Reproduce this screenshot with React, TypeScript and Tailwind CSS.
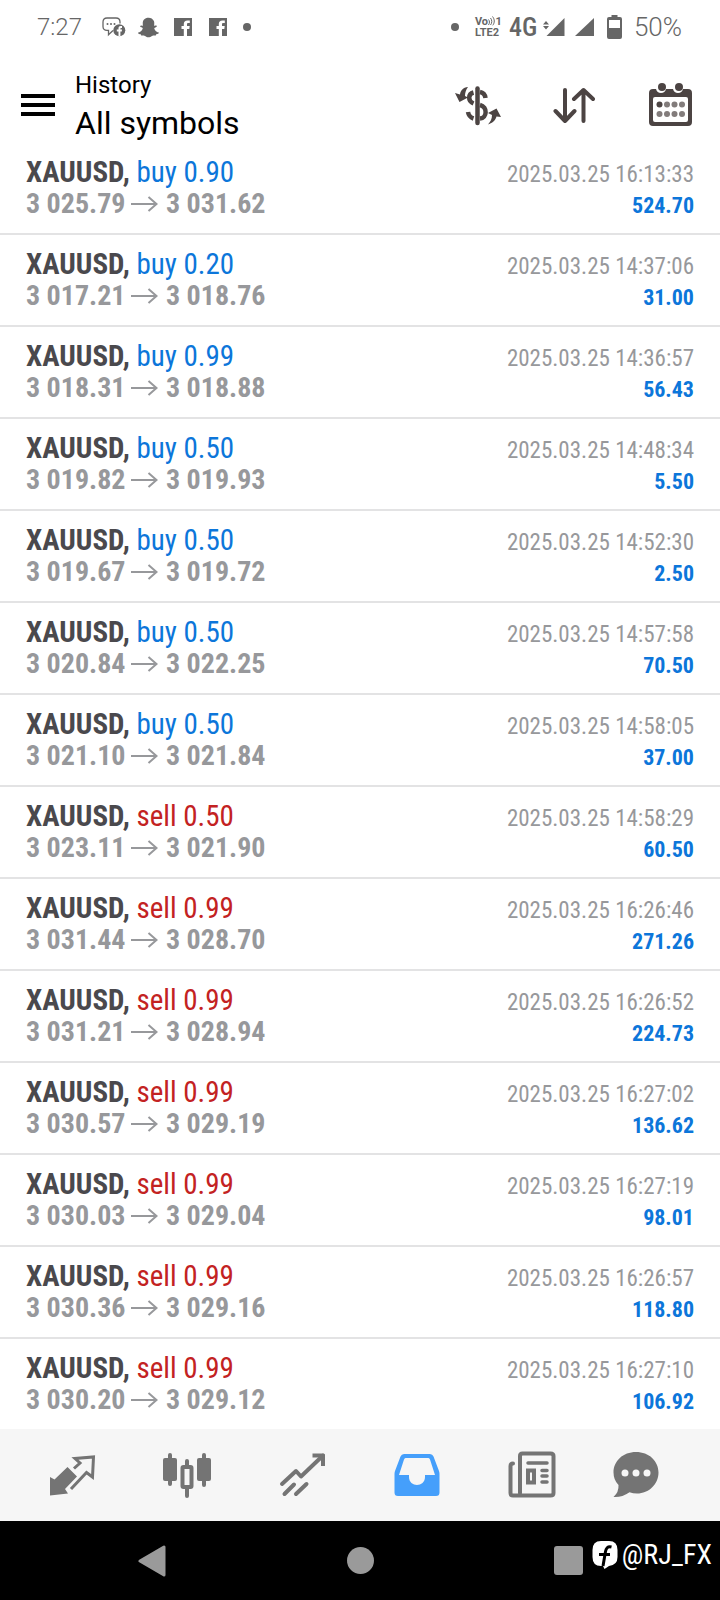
import { FaSnapchatGhost } from "react-icons/fa";

type Deal = {
  side: "buy" | "sell";
  volume: string;
  open: string;
  close: string;
  time: string;
  profit: string;
};

const deals: Deal[] = [
  { side: "buy", volume: "0.90", open: "3 025.79", close: "3 031.62", time: "2025.03.25 16:13:33", profit: "524.70" },
  { side: "buy", volume: "0.20", open: "3 017.21", close: "3 018.76", time: "2025.03.25 14:37:06", profit: "31.00" },
  { side: "buy", volume: "0.99", open: "3 018.31", close: "3 018.88", time: "2025.03.25 14:36:57", profit: "56.43" },
  { side: "buy", volume: "0.50", open: "3 019.82", close: "3 019.93", time: "2025.03.25 14:48:34", profit: "5.50" },
  { side: "buy", volume: "0.50", open: "3 019.67", close: "3 019.72", time: "2025.03.25 14:52:30", profit: "2.50" },
  { side: "buy", volume: "0.50", open: "3 020.84", close: "3 022.25", time: "2025.03.25 14:57:58", profit: "70.50" },
  { side: "buy", volume: "0.50", open: "3 021.10", close: "3 021.84", time: "2025.03.25 14:58:05", profit: "37.00" },
  { side: "sell", volume: "0.50", open: "3 023.11", close: "3 021.90", time: "2025.03.25 14:58:29", profit: "60.50" },
  { side: "sell", volume: "0.99", open: "3 031.44", close: "3 028.70", time: "2025.03.25 16:26:46", profit: "271.26" },
  { side: "sell", volume: "0.99", open: "3 031.21", close: "3 028.94", time: "2025.03.25 16:26:52", profit: "224.73" },
  { side: "sell", volume: "0.99", open: "3 030.57", close: "3 029.19", time: "2025.03.25 16:27:02", profit: "136.62" },
  { side: "sell", volume: "0.99", open: "3 030.03", close: "3 029.04", time: "2025.03.25 16:27:19", profit: "98.01" },
  { side: "sell", volume: "0.99", open: "3 030.36", close: "3 029.16", time: "2025.03.25 16:26:57", profit: "118.80" },
  { side: "sell", volume: "0.99", open: "3 030.20", close: "3 029.12", time: "2025.03.25 16:27:10", profit: "106.92" },
];

function FacebookSquare() {
  return (
    <svg width="18" height="18" viewBox="0 0 18 18" fill="currentColor" aria-hidden="true">
      <path d="M0 0H18V18H13V11H15.3L15.7 8H13V6.4C13 5.5 13.4 5 14.4 5H15.8V2.4H13.5C11 2.4 9.8 3.8 9.8 6V8H7.5V11H9.8V18H0Z" />
    </svg>
  );
}

function StatusBar() {
  return (
    <div className="flex h-[54px] items-center justify-between pl-[37px] pr-[38px] text-[#666]">
      <div className="flex items-center">
        <span className="w-[65px] text-2xl font-light">7:27</span>
        <svg width="24" height="20" viewBox="0 0 24 20" fill="none" aria-hidden="true">
          <path d="M11 13.5 6.5 17.8V13.4H5C2.4 13.4 1 12 1 9.5V5C1 2.4 2.4 1 5 1H14C16.6 1 18 2.4 18 5V6.5" stroke="currentColor" strokeWidth="1.3" />
          <g fill="currentColor">
            <circle cx="5.5" cy="7" r="1" />
            <circle cx="9" cy="7" r="1" />
            <circle cx="12.5" cy="7" r="1" />
            <circle cx="17.3" cy="13.2" r="6" />
          </g>
          <path d="M16.5 19.2V14.4H14.8V12.6H16.5V11.3C16.5 9.9 17.3 9.1 18.7 9.1H20V10.9H19C18.6 10.9 18.4 11.1 18.4 11.5V12.6H20L19.8 14.4H18.4V19.2Z" fill="#fff" />
        </svg>
        <FaSnapchatGhost className="ml-3 h-[21px] w-[21px]" aria-hidden="true" />
        <span className="ml-[15px] flex gap-[17px]">
          <FacebookSquare />
          <FacebookSquare />
        </span>
        <span className="ml-4 size-2 rounded-full bg-[#666]" />
      </div>
      <div className="flex items-center">
        <span className="size-2 rounded-full bg-[#666]" />
        <span className="ml-4 flex w-[27px] flex-col text-[11px] font-bold leading-[11px]">
          <span className="flex justify-between">
            <span>Vo</span>
            <svg width="7" height="10" viewBox="0 0 7 10" fill="none" stroke="currentColor" aria-hidden="true">
              <path d="M.5 3.5C1.8 5 1.8 7 .5 9M2.5 2C4.2 4 4.2 7 2.5 9M4.5 .5C6.8 3.3 6.8 6.7 4.8 9.3" />
            </svg>
            <span>1</span>
          </span>
          <span>LTE2</span>
        </span>
        <span className="ml-[7px] w-8 font-['Roboto_Condensed',Roboto,sans-serif] text-[26px] font-medium">4G</span>
        <svg className="ml-0.5" width="22" height="18" viewBox="0 0 22 18" fill="currentColor" aria-hidden="true">
          <path d="M21.5 0V18H3.5ZM3 3 6 6.5H0ZM0 8H6L3 11.5Z" />
        </svg>
        <svg className="ml-[10px]" width="19" height="18" viewBox="0 0 19 18" fill="currentColor" aria-hidden="true">
          <path d="M19 0V18H0Z" />
        </svg>
        <svg className="ml-[13px]" width="15" height="24" viewBox="0 0 15 24" fill="currentColor" aria-hidden="true">
          <path fillRule="evenodd" d="M4.5 0H10.5V2H13Q15 2 15 4V22Q15 24 13 24H2Q0 24 0 22V4Q0 2 2 2H4.5ZM2 5V13H13V5Z" />
        </svg>
        <span className="ml-3 text-[26px] font-light">50%</span>
      </div>
    </div>
  );
}

function AppHeader() {
  return (
    <header className="flex h-[89px] items-start justify-between pl-[21px] pr-[27px]">
      <div className="flex items-start">
        <button type="button" aria-label="Open menu" className="mt-10 flex w-[34px] flex-col gap-[5px]">
          <span className="h-1 w-full bg-black" />
          <span className="h-1 w-full bg-black" />
          <span className="h-1 w-full bg-black" />
        </button>
        <div className="ml-5 pt-[13px] text-black">
          <p className="text-2xl leading-9">History</p>
          <h1 className="text-[32px] leading-10">All symbols</h1>
        </div>
      </div>
      <div className="mt-7 flex items-center text-[#4c4443]">
        <button type="button" aria-label="Currency">
          <svg width="46" height="46" viewBox="0 0 46 46" fill="none" aria-hidden="true">
            <g stroke="currentColor" strokeWidth="4.5">
              <path d="M22.5 6.5V41" strokeLinecap="round" />
              <path d="M18.5 10.5C13 12 12.5 19 18.5 21.5M25 10C28 10.5 30 12.5 30.5 16M25 23C33 25 32 36 25 36.5M18.5 36.5C15.5 35.5 13.5 33 13 30" />
            </g>
            <g fill="currentColor">
              <path d="M13 5C8 5.5 5.5 8.5 5 12.5L0 11 4.5 20 13 15.5 10 14C10 10.5 11 7.5 13 5Z" />
              <path d="M33 42.5C38 41 40.5 38 41.5 34.5L46 35 41.5 26.5 33 31 37 33C37 37 35.5 39.5 33 42.5Z" />
            </g>
          </svg>
        </button>
        <button type="button" aria-label="Sort" className="ml-[52px]">
          <svg width="42" height="46" viewBox="0 0 42 46" fill="none" stroke="currentColor" strokeWidth="4" strokeLinecap="round" strokeLinejoin="round" aria-hidden="true">
            <path d="M12 8V39M2.5 29 12 39 21.5 29M30.5 39V8M21 17 30.5 8 40 17" />
          </svg>
        </button>
        <button type="button" aria-label="Select period" className="ml-[52px]">
          <svg width="46" height="46" viewBox="0 0 46 46" fill="none" aria-hidden="true">
            <path fillRule="evenodd" fill="currentColor" d="M4 7H9Q10 11 14 11Q18 11 19 7H26Q27 11 31 11Q35 11 36 7H41Q45 7 45 11V40Q45 44 41 44H6Q2 44 2 40V11Q2 7 6 7ZM8 15Q6 15 6 17V38Q6 40 8 40H39Q41 40 41 38V17Q41 15 39 15Z" />
            <g fill="currentColor">
              <circle cx="15" cy="5" r="4" />
              <circle cx="32" cy="5" r="4" />
              <circle cx="12.5" cy="22.5" r="3" />
            </g>
            <g fill="#827c7b">
              <circle cx="20" cy="22.5" r="3" />
              <circle cx="27.5" cy="22.5" r="3" />
              <circle cx="35" cy="22.5" r="3" />
              <circle cx="12.5" cy="32" r="3" />
              <circle cx="20" cy="32" r="3" />
              <circle cx="27.5" cy="32" r="3" />
              <circle cx="35" cy="32" r="3" />
            </g>
          </svg>
        </button>
      </div>
    </header>
  );
}

function DealRow({ deal }: { deal: Deal }) {
  return (
    <li className="border-b-2 border-[#e3e3e4] px-[26px] py-[13px] last:border-b-0">
      <div className="flex h-8 items-baseline justify-between whitespace-nowrap">
        <p className="text-[29px] leading-8">
          <span className="font-bold text-[#4a494d]">XAUUSD,</span>{" "}
          <span className={deal.side === "buy" ? "text-[#0c76da]" : "text-[#c32222]"}>
            {deal.side} {deal.volume}
          </span>
        </p>
        <time className="text-[23px] leading-8 text-[#97989b]">{deal.time}</time>
      </div>
      <div className="flex h-8 items-end justify-between whitespace-nowrap">
        <p className="flex text-[28px] font-bold leading-8 text-[#97989b]">
          <span className="w-[105px]">{deal.open}</span>
          <svg className="mr-2 mt-0.5" width="27" height="28" viewBox="0 0 27 28" fill="none" stroke="currentColor" strokeWidth="2" aria-label="to">
            <path d="M0 14H25.5M17.5 7 25.5 14 17.5 21" />
          </svg>
          <span>{deal.close}</span>
        </p>
        <span className="text-[22px] font-bold leading-7 text-[#0c76da]">{deal.profit}</span>
      </div>
    </li>
  );
}

function BottomNav() {
  const item = "flex items-center justify-center";
  return (
    <nav className="grid h-[92px] grid-cols-[5fr_5fr_5fr_5fr_5fr_4fr] bg-[#f6f6f6] pl-3.5 pr-[38px] text-[#747474]">
      <button type="button" aria-label="Quotes" className={item}>
        <svg width="48" height="48" viewBox="0 0 48 48" fill="none" aria-hidden="true">
          <path fill="currentColor" d="M2 44.500V26L6.500 28.500 19.500 16 29 25.500 17 38 20 42.500Z" />
          <path stroke="currentColor" strokeWidth="3" d="M26 17.500 32 12 27 7.500 45.500 6 44.500 26 38.500 21.500 23 38" />
        </svg>
      </button>
      <button type="button" aria-label="Charts" className={item}>
        <svg width="48" height="48" viewBox="0 0 48 48" fill="none" aria-hidden="true">
          <g fill="currentColor">
            <rect x="0" y="7" width="14" height="23" rx="2" />
            <rect x="34" y="7" width="14" height="23" rx="2" />
          </g>
          <g stroke="currentColor" strokeWidth="4">
            <path strokeLinecap="round" d="M7 4V33M41 4V34M24 10V15M24 38V45" />
            <rect x="19.5" y="16" width="9" height="20" rx="1" />
          </g>
        </svg>
      </button>
      <button type="button" aria-label="Trade" className={item}>
        <svg width="48" height="48" viewBox="0 0 48 48" fill="none" stroke="currentColor" strokeWidth="4" aria-hidden="true">
          <path strokeLinecap="round" strokeLinejoin="round" d="M4 33 18 20 23 25.5 45 4.5M6.5 43 16 33.5M18 43 28.5 33" />
          <path strokeLinejoin="round" d="M34.5 4.5H45V15" />
        </svg>
      </button>
      <button type="button" aria-label="History" aria-current="page" className="flex items-center justify-center text-[#459ffb]">
        <svg width="48" height="48" viewBox="0 0 48 48" fill="currentColor" aria-hidden="true">
          <path fillRule="evenodd" d="M11 3H37Q39.5 3 40.5 5.5L46 20Q46.500 21.500 46.500 23V41.500Q46.500 45 43 45H5Q1.500 45 1.500 41.500V23Q1.500 21.500 2 20L7.500 5.500Q8.500 3 11 3ZM12.500 7Q11.500 7 11 8.500L6 24H16V26C16 36.500 32 36.500 32 26V24H42L37 8.500Q36.500 7 35.500 7Z" />
        </svg>
      </button>
      <button type="button" aria-label="News" className={item}>
        <svg width="48" height="48" viewBox="0 0 48 48" fill="none" stroke="currentColor" strokeWidth="4" strokeLinecap="round" aria-hidden="true">
          <path d="M12 42V5Q12 2.5 14.5 2.5H42.5Q45.5 2.5 45.5 5V42Q45.5 44.5 42.5 44.5H5Q2.5 44.5 2.5 42V15Q2.5 12.5 5 12.5" />
          <path strokeWidth="3.5" d="M20 12H39M34 19.5H39M34 25H39M34 31H39" />
          <rect x="20" y="19.5" width="6" height="12" />
        </svg>
      </button>
      <button type="button" aria-label="Messages" className={item}>
        <svg width="48" height="48" viewBox="0 0 48 48" aria-hidden="true">
          <path fill="currentColor" d="M24 1C37 1 46.5 10 46.5 21.5S37 42.5 25 42.5Q21 42.5 17.5 41.2Q10 46.5 1.5 46Q7 41 6.500 34Q1.500 29 1.500 21.500C1.500 10 11 1 24 1Z" />
          <g fill="#f6f6f6">
            <circle cx="13" cy="22" r="3.5" />
            <circle cx="24" cy="22" r="3.5" />
            <circle cx="35" cy="22" r="3.5" />
          </g>
        </svg>
      </button>
    </nav>
  );
}

function SystemBar() {
  return (
    <div className="relative grid h-[79px] grid-cols-3 bg-black px-12 text-[#9a9a9a]">
      <button type="button" aria-label="Back" className="flex items-center justify-center">
        <svg width="28" height="32" viewBox="0 0 28 32" fill="currentColor" stroke="currentColor" strokeWidth="3" strokeLinejoin="round" aria-hidden="true">
          <path d="M2 16 26 2V30Z" />
        </svg>
      </button>
      <button type="button" aria-label="Home" className="flex items-center justify-center">
        <span className="size-[27px] rounded-full bg-[#9a9a9a]" />
      </button>
      <button type="button" aria-label="Recent apps" className="flex items-center justify-center">
        <span className="size-[29px] rounded-[3px] bg-[#9a9a9a]" />
      </button>
      <div className="absolute right-2 top-[18px] flex items-center gap-1 text-white">
        <svg width="26" height="28" viewBox="0 0 26 28" aria-hidden="true">
          <path fill="#fff" d="M9 0H17Q25.5 0 25.5 9V16Q25.5 24 17 25L12.5 28 11 25H9Q.5 25 .5 16V9Q.5 0 9 0Z" />
          <path d="M19.5 6C15.5 5 14 7.5 13.5 10.5L11 25M7 13.5H18" fill="none" stroke="#000" strokeWidth="3" />
        </svg>
        <span className="font-['Roboto_Condensed',Roboto,sans-serif] text-[28px] leading-8">@RJ_FX</span>
      </div>
    </div>
  );
}

export default function App() {
  return (
    <div className="flex min-h-screen flex-col bg-white font-[Roboto,sans-serif]">
      <StatusBar />
      <AppHeader />
      <main className="grow font-['Roboto_Condensed',Roboto,sans-serif]">
        <ul>
          {deals.map((deal) => (
            <DealRow key={deal.time} deal={deal} />
          ))}
        </ul>
      </main>
      <BottomNav />
      <SystemBar />
    </div>
  );
}
